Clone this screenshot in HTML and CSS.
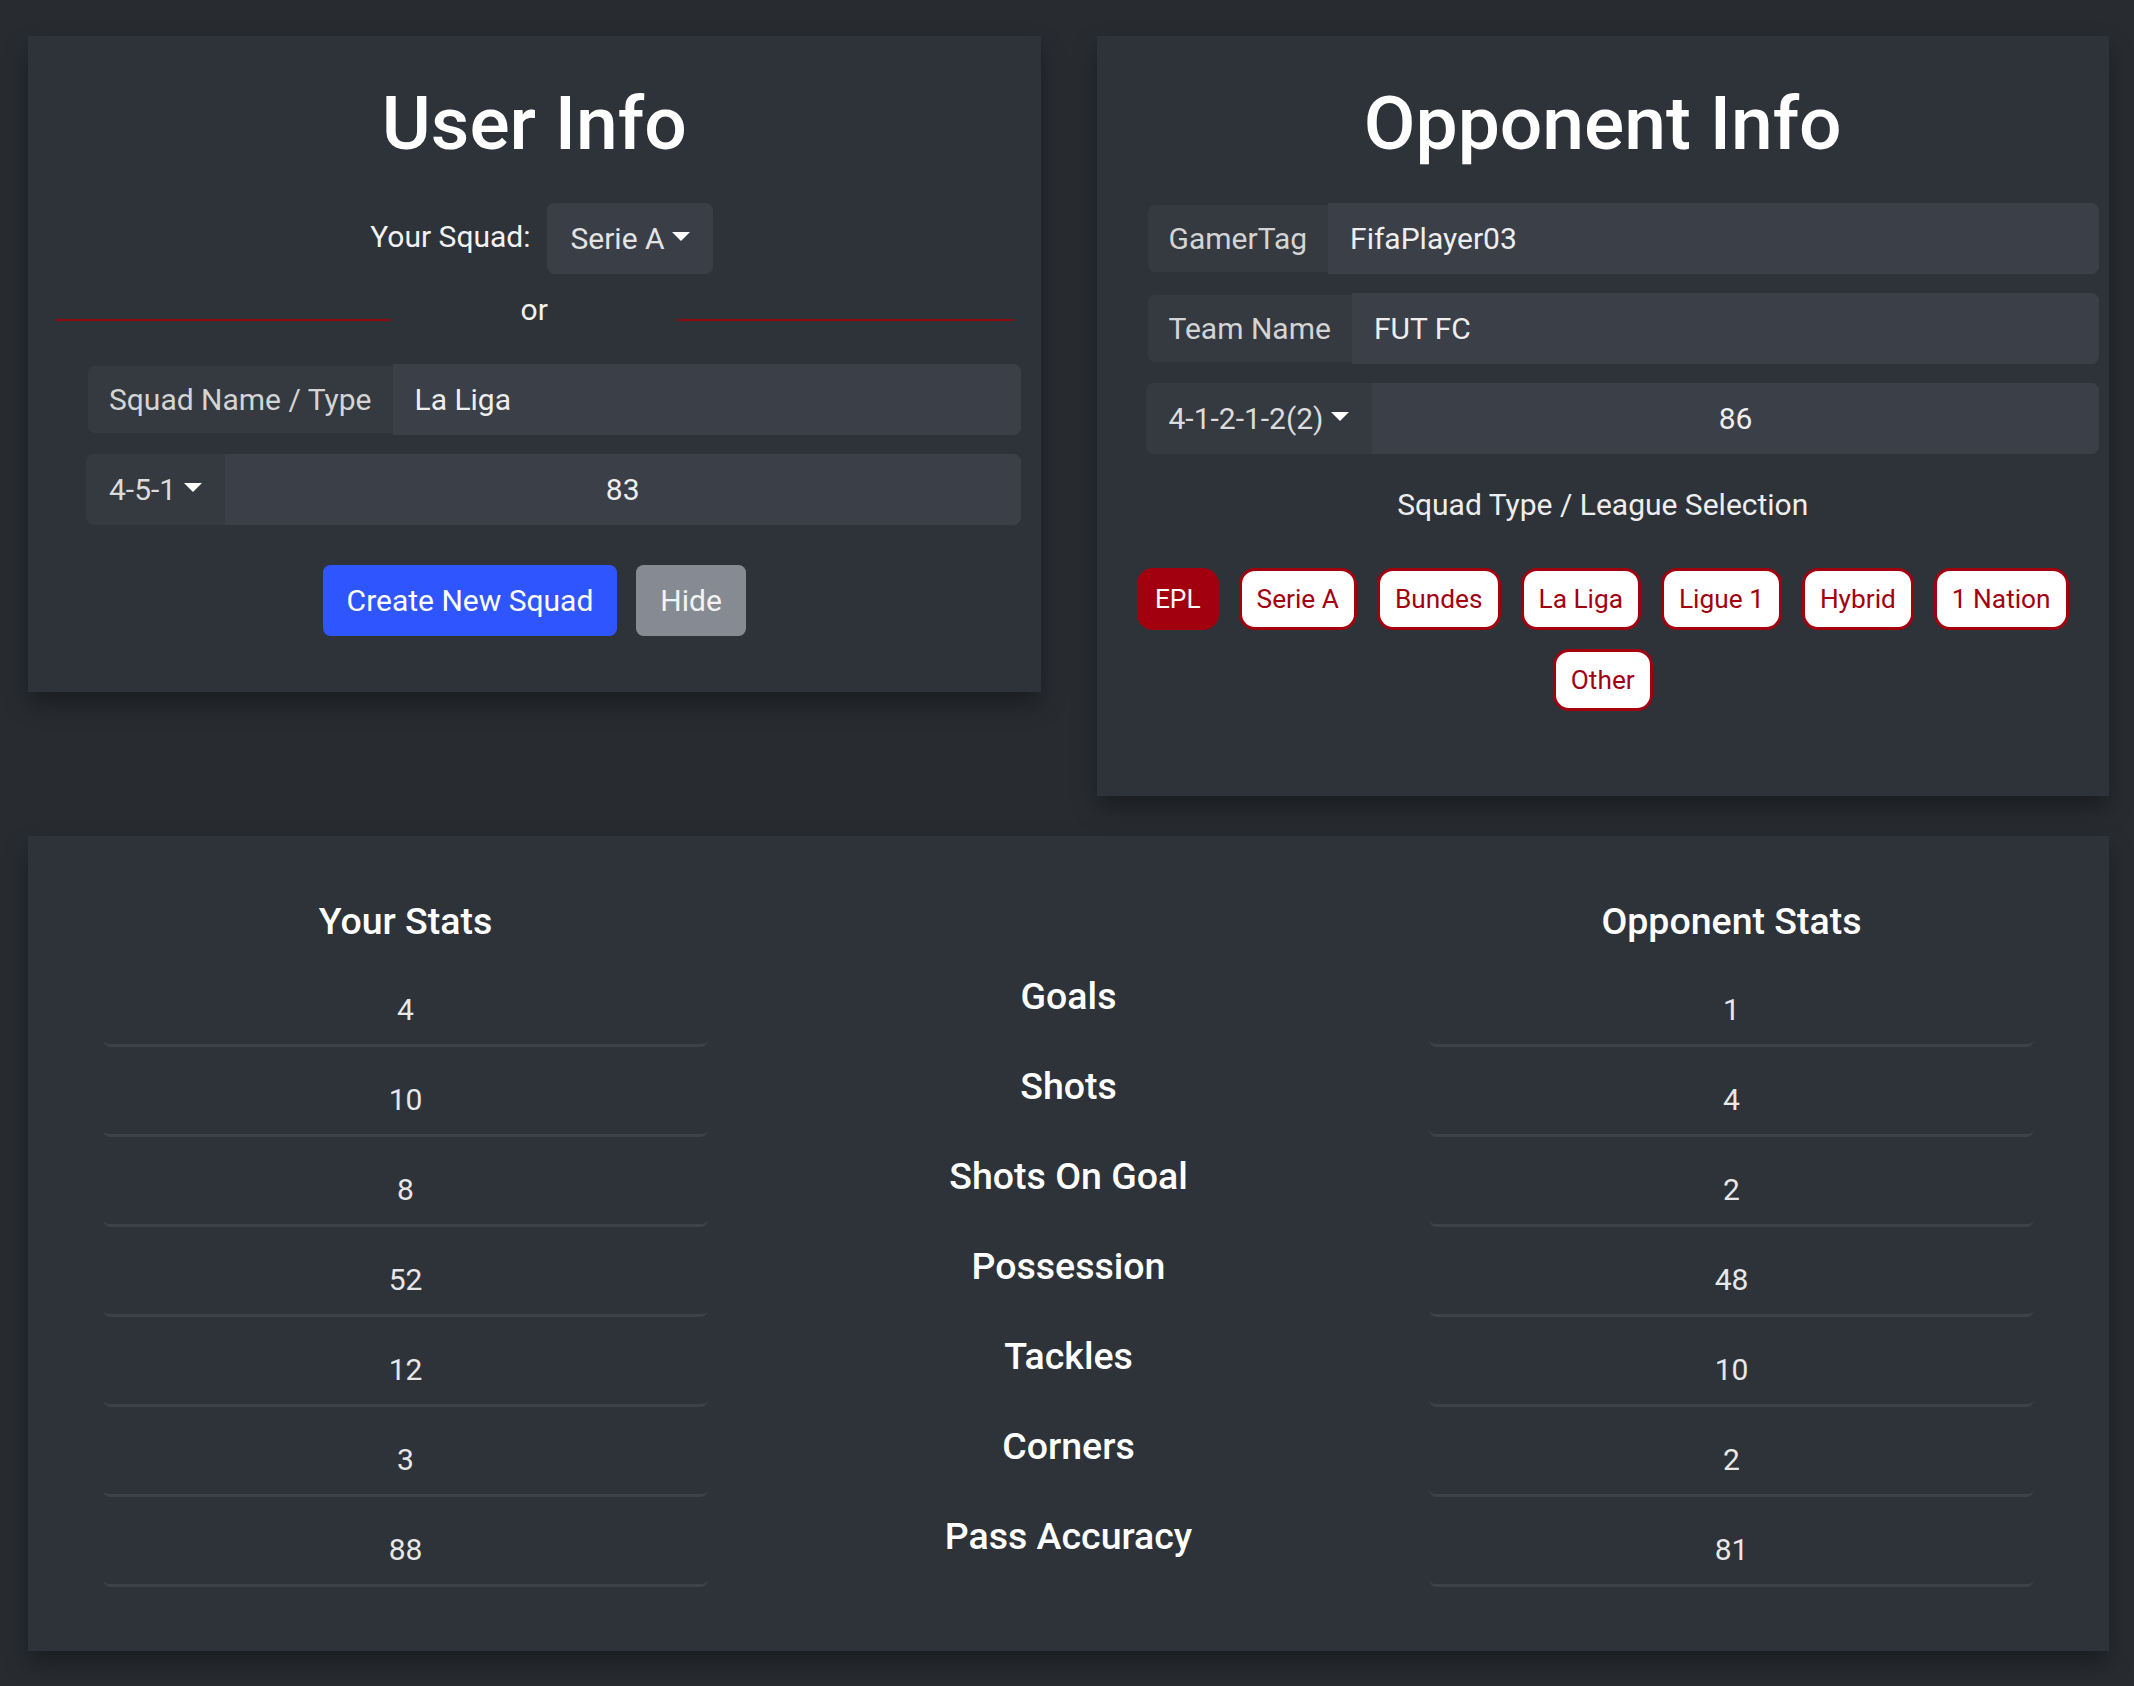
FILE: index.html
```html
<!DOCTYPE html>
<html lang="en">
<head>
<meta charset="utf-8">
<title>Match Stats</title>
<link rel="stylesheet" href="styles.css">
</head>
<body>
<main class="page">
  <div class="top-row">
    <section class="card user-card">
      <h1 class="card-title">User Info</h1>
      <div class="squad-pick">
        <span class="squad-label">Your Squad:</span>
        <button class="dd-btn" type="button">Serie A<span class="caret"></span></button>
      </div>
      <div class="or-row">
        <span class="or-line"></span>
        <span class="or-text">or</span>
        <span class="or-line"></span>
      </div>
      <div class="input-group user-group">
        <span class="ig-label">Squad Name / Type</span>
        <input class="ig-input" type="text" value="La Liga">
      </div>
      <div class="input-group user-group gap-top">
        <button class="ig-dd" type="button">4-5-1<span class="caret"></span></button>
        <input class="ig-input centered" type="text" value="83">
      </div>
      <div class="btn-row">
        <button class="btn btn-primary" type="button">Create New Squad</button>
        <button class="btn btn-secondary" type="button">Hide</button>
      </div>
    </section>

    <section class="card opp-card">
      <h1 class="card-title">Opponent Info</h1>
      <div class="input-group opp-group first">
        <span class="ig-label">GamerTag</span>
        <input class="ig-input" type="text" value="FifaPlayer03">
      </div>
      <div class="input-group opp-group gap-top">
        <span class="ig-label">Team Name</span>
        <input class="ig-input" type="text" value="FUT FC">
      </div>
      <div class="input-group opp-group gap-top">
        <button class="ig-dd" type="button">4-1-2-1-2(2)<span class="caret"></span></button>
        <input class="ig-input centered" type="text" value="86">
      </div>
      <p class="league-title">Squad Type / League Selection</p>
      <div class="pills">
        <button class="pill active" type="button">EPL</button>
        <button class="pill" type="button">Serie A</button>
        <button class="pill" type="button">Bundes</button>
        <button class="pill" type="button">La Liga</button>
        <button class="pill" type="button">Ligue 1</button>
        <button class="pill" type="button">Hybrid</button>
        <button class="pill" type="button">1 Nation</button>
        <button class="pill" type="button">Other</button>
      </div>
    </section>
  </div>

  <section class="card stats-card">
    <div class="stats-grid">
      <h5 class="stats-head">Your Stats</h5>
      <div class="stats-empty"></div>
      <h5 class="stats-head">Opponent Stats</h5>

      <div class="cell"><div class="stat-val">4</div></div>
      <div class="stat-label">Goals</div>
      <div class="cell"><div class="stat-val">1</div></div>

      <div class="cell"><div class="stat-val">10</div></div>
      <div class="stat-label">Shots</div>
      <div class="cell"><div class="stat-val">4</div></div>

      <div class="cell"><div class="stat-val">8</div></div>
      <div class="stat-label">Shots On Goal</div>
      <div class="cell"><div class="stat-val">2</div></div>

      <div class="cell"><div class="stat-val">52</div></div>
      <div class="stat-label">Possession</div>
      <div class="cell"><div class="stat-val">48</div></div>

      <div class="cell"><div class="stat-val">12</div></div>
      <div class="stat-label">Tackles</div>
      <div class="cell"><div class="stat-val">10</div></div>

      <div class="cell"><div class="stat-val">3</div></div>
      <div class="stat-label">Corners</div>
      <div class="cell"><div class="stat-val">2</div></div>

      <div class="cell"><div class="stat-val">88</div></div>
      <div class="stat-label">Pass Accuracy</div>
      <div class="cell"><div class="stat-val">81</div></div>
    </div>
  </section>
</main>
</body>
</html>
```

FILE: styles.css
```css
* {
  box-sizing: border-box;
}

body {
  margin: 0;
  background: #282c31;
  font-family: Roboto, "Noto Sans", sans-serif;
  color: #ececec;
}

.page {
  padding: 36px 25px 34px 28px;
}

.top-row {
  display: grid;
  grid-template-columns: 1fr 1fr;
  column-gap: 56px;
  align-items: start;
  margin-bottom: 40px;
}

.card {
  background: #2e333a;
  box-shadow: 0 12px 22px rgba(0, 0, 0, 0.35);
}

.card-title {
  margin: 0;
  font-size: 75px;
  font-weight: 500;
  line-height: 90px;
  text-align: center;
  color: #ffffff;
}

/* ---------- user card ---------- */
.user-card {
  padding: 42px 0 56px;
}

.squad-pick {
  margin-top: 35px;
  display: flex;
  justify-content: center;
  align-items: center;
  padding-left: 15px;
}

.squad-label {
  font-size: 30px;
  line-height: 45px;
  color: #f2f2f2;
  margin-right: 17px;
  position: relative;
  top: -2px;
}

.dd-btn,
.ig-dd {
  font-family: inherit;
  font-size: 30px;
  line-height: 45px;
  height: 71px;
  padding: 13px 23px;
  border: none;
  border-radius: 7.5px;
  background: #3a3f47;
  color: #e4e4e4;
  white-space: nowrap;
}

.caret {
  display: inline-block;
  margin-left: 7.65px;
  vertical-align: 7.65px;
  border-top: 9px solid #ffffff;
  border-left: 9px solid transparent;
  border-right: 9px solid transparent;
  border-bottom: 0;
}

.or-row {
  margin: 13px 28px 0;
  display: flex;
  align-items: flex-start;
}

.or-line {
  flex: 1;
  height: 2px;
  margin-top: 32px;
  background: #8f0911;
}

.or-text {
  width: 286px;
  text-align: center;
  font-size: 30px;
  line-height: 45px;
  color: #f2f2f2;
}

.input-group {
  display: flex;
  height: 71px;
}

.user-group {
  margin: 32px 20px 0 58px;
}

.gap-top {
  margin-top: 19px;
}

.ig-label {
  display: flex;
  align-items: center;
  padding: 0 21px;
  font-size: 30px;
  color: #d4d4d4;
  background: #353a41;
  border: 2px solid #2e333a;
  border-right: none;
  border-radius: 9px 0 0 9px;
  white-space: nowrap;
}

.ig-dd {
  background: #353a41;
  border-radius: 7.5px 0 0 7.5px;
  color: #dcdcdc;
}

.ig-input {
  flex: 1;
  min-width: 0;
  height: 71px;
  padding: 0 22px;
  border: none;
  border-radius: 0 7.5px 7.5px 0;
  background: #3b3f48;
  font-family: inherit;
  font-size: 30px;
  color: #eeeeee;
  outline: none;
}

.ig-input.centered {
  text-align: center;
}

.btn-row {
  margin-top: 40px;
  display: flex;
  justify-content: center;
  gap: 19px;
}

.btn {
  font-family: inherit;
  font-size: 30px;
  line-height: 45px;
  height: 71px;
  padding: 13px 24px;
  border: none;
  border-radius: 7.5px;
  color: #ffffff;
}

.btn-primary {
  background: #2f55ff;
}

.btn-secondary {
  background: #868b93;
  color: #f3f3f3;
}

/* ---------- opponent card ---------- */
.opp-card {
  padding: 42px 0 85px;
}

.opp-group {
  margin: 19px 10px 0 49px;
}

.opp-group.first {
  margin-top: 35px;
}

.league-title {
  margin: 28px 0 0;
  text-align: center;
  font-size: 30px;
  line-height: 45px;
  color: #eeeeee;
}

.pills {
  margin-top: 41px;
  padding: 0 20px;
  display: flex;
  flex-wrap: wrap;
  justify-content: center;
  gap: 19px 20px;
}

.pill {
  font-family: inherit;
  font-size: 26.25px;
  line-height: 40px;
  height: 62px;
  padding: 8px 15px;
  border: 3px solid #a3000f;
  border-radius: 16px;
  background: #ffffff;
  color: #a3000f;
  white-space: nowrap;
}

.pill.active {
  background: #a3000f;
  color: #ffffff;
}

/* ---------- stats card ---------- */
.stats-card {
  padding: 63px 46px 64px;
}

.stats-grid {
  display: grid;
  grid-template-columns: repeat(3, 1fr);
  row-gap: 19px;
}

.stats-head {
  margin: 0 0 13px;
  font-size: 37.5px;
  font-weight: 500;
  line-height: 45px;
  text-align: center;
  color: #ffffff;
}

.cell {
  padding: 0 29px;
}

.stat-val {
  height: 71px;
  border-bottom: 3px solid #3c414a;
  border-radius: 7.5px;
  text-align: center;
  font-size: 30px;
  line-height: 68px;
  color: #e8e8e8;
}

.stat-label {
  margin-top: -2px;
  font-size: 37.5px;
  font-weight: 500;
  line-height: 45px;
  text-align: center;
  color: #ffffff;
}
```
